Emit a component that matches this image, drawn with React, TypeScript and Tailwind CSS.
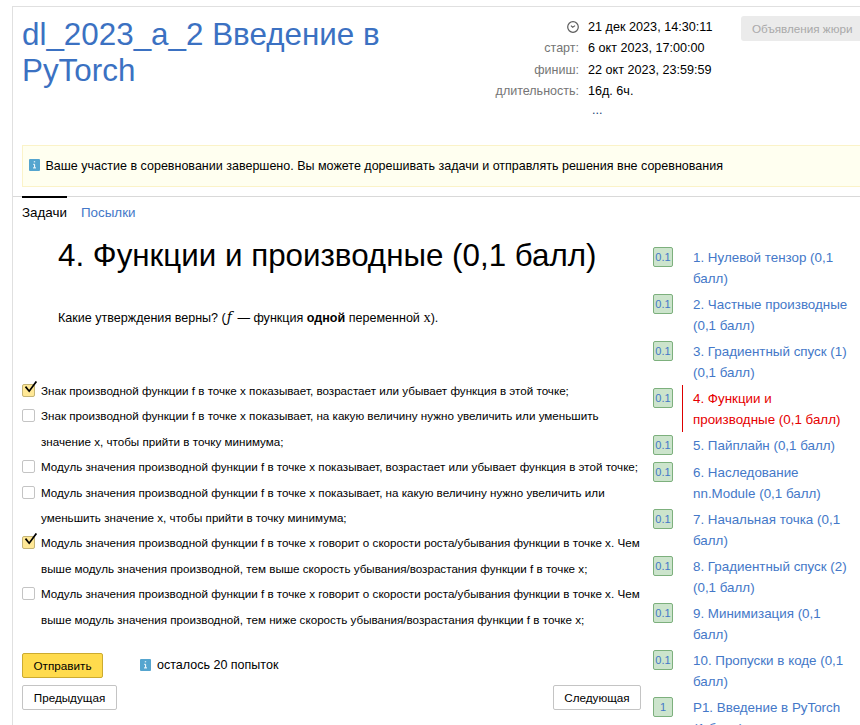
import React from 'react';

const options = [
  { checked: true, lines: ['Знак производной функции f в точке x показывает, возрастает или убывает функция в этой точке;'] },
  { checked: false, lines: ['Знак производной функции f в точке x показывает, на какую величину нужно увеличить или уменьшить', 'значение x, чтобы прийти в точку минимума;'] },
  { checked: false, lines: ['Модуль значения производной функции f в точке x показывает, возрастает или убывает функция в этой точке;'] },
  { checked: false, lines: ['Модуль значения производной функции f в точке x показывает, на какую величину нужно увеличить или', 'уменьшить значение x, чтобы прийти в точку минимума;'] },
  { checked: true, lines: ['Модуль значения производной функции f в точке x говорит о скорости роста/убывания функции в точке x. Чем', 'выше модуль значения производной, тем выше скорость убывания/возрастания функции f в точке x;'] },
  { checked: false, lines: ['Модуль значения производной функции f в точке x говорит о скорости роста/убывания функции в точке x. Чем', 'выше модуль значения производной, тем ниже скорость убывания/возрастания функции f в точке x;'] },
];

const problems = [
  { score: '0.1', lines: ['1. Нулевой тензор (0,1', 'балл)'] },
  { score: '0.1', lines: ['2. Частные производные', '(0,1 балл)'] },
  { score: '0.1', lines: ['3. Градиентный спуск (1)', '(0,1 балл)'] },
  { score: '0.1', lines: ['4. Функции и', 'производные (0,1 балл)'], active: true },
  { score: '0.1', lines: ['5. Пайплайн (0,1 балл)'] },
  { score: '0.1', lines: ['6. Наследование', 'nn.Module (0,1 балл)'] },
  { score: '0.1', lines: ['7. Начальная точка (0,1', 'балл)'] },
  { score: '0.1', lines: ['8. Градиентный спуск (2)', '(0,1 балл)'] },
  { score: '0.1', lines: ['9. Минимизация (0,1', 'балл)'] },
  { score: '0.1', lines: ['10. Пропуски в коде (0,1', 'балл)'] },
  { score: '1', lines: ['P1. Введение в PyTorch', '(1 балл)'] },
];

const times = [
  { label: 'старт:', value: '6 окт 2023, 17:00:00' },
  { label: 'финиш:', value: '22 окт 2023, 23:59:59' },
  { label: 'длительность:', value: '16д. 6ч.' },
];

function InfoIcon() {
  return (
    <svg className="block h-3 w-[11px] shrink-0" viewBox="0 0 11 12">
      <rect width="11" height="12" rx="1" fill="#55a5cf" />
      <path d="M4.8 2.8h1.4M4.2 5.3h1.4v3.4M4 8.9h3" stroke="#fff" strokeWidth="1" fill="none" />
    </svg>
  );
}

function ClockIcon() {
  return (
    <svg className="block h-3 w-3" viewBox="0 0 12 12" fill="none" stroke="#5c5c5c" strokeWidth="1.2">
      <circle cx="6" cy="6" r="5.3" />
      <path d="M3.9 4.6 5.7 6.2 8.1 4.6" strokeWidth="1.1" />
    </svg>
  );
}

function Checkbox({ checked }: { checked: boolean }) {
  return (
    <span className={`relative mt-[6px] block size-[13px] shrink-0 rounded-[2px] border ${checked ? 'border-[#c4b476] bg-[#ffe896]' : 'border-[#c4c4c4] bg-white'}`}>
      {checked && (
        <svg className="absolute -top-[4px] left-[1px] h-[14px] w-[14px]" viewBox="0 0 14 14">
          <path d="M1.5 5.6 5.2 10.2 12.4 .4" fill="none" stroke="#000" strokeWidth="1.7" />
        </svg>
      )}
    </span>
  );
}

export default function App() {
  return (
    <div className="h-[725px] w-[860px] overflow-hidden bg-white pt-[6px] pl-3 font-['Liberation_Sans',Arial,sans-serif] text-[12.53px] text-black">
      <div className="flex h-[719px] flex-col border-t border-l border-[#e0e0e0]">
        <header className="flex h-[138px] shrink-0 pl-[9px]">
          <h1 className="w-[445px] shrink-0 pt-[10px] text-[31.38px] leading-9 text-[#3b71c2]">
            dl_2023_a_2 Введение в<br />PyTorch
          </h1>
          <div className="w-[274px] shrink-0 pt-[9px]">
            <div className="flex h-[22px] items-center">
              <div className="mr-[9px] flex w-[112px] justify-end"><ClockIcon /></div>
              <div className="text-[12.65px] whitespace-nowrap">21 дек 2023, 14:30:11</div>
            </div>
            {times.map((t) => (
              <div key={t.label} className="flex h-[21.5px] items-center">
                <div className="mr-[9px] w-[112px] text-right text-[#757575]">{t.label}</div>
                <div className="text-[12.6px] whitespace-nowrap">{t.value}</div>
              </div>
            ))}
            <div className="pl-[125px] leading-[15px] text-[#1a3f78]">...</div>
          </div>
          <div className="mt-[9px] flex h-[25px] w-[130px] shrink-0 items-center rounded-[3px] bg-[#ebebeb] pl-[11px] text-[11.7px] whitespace-nowrap text-[#a9a9a9]">
            Объявления жюри
          </div>
        </header>

        <div className="ml-[9px] flex h-[42px] shrink-0 items-center gap-[5.5px] border-y border-l border-[#fbf3c8] bg-[#fffff0] pl-[6px]">
          <div className="-mt-[2px]"><InfoIcon /></div>
          <span>Ваше участие в соревновании завершено. Вы можете дорешивать задачи и отправлять решения вне соревнования</span>
        </div>

        <nav className="mt-[9px] flex h-[39px] shrink-0 gap-[14px] border-t border-[#d9d9d9] pl-[9px] text-[13.4px] leading-[29px]">
          <a className="-mt-px h-[30px] border-t-2 border-black">Задачи</a>
          <a className="pt-px text-[#4478c8]">Посылки</a>
        </nav>

        <div className="flex">
          <main className="w-[640px] shrink-0 pl-[9px]">
            <h2 className="ml-9 h-[72px] pt-px text-[31.34px] leading-[40px] whitespace-nowrap">4. Функции и производные (0,1 балл)</h2>
            <p className="ml-9 h-[71px] text-[12.55px] leading-[20px] whitespace-nowrap">
              Какие утверждения верны? (<span className="mr-[2px] ml-px font-['DejaVu_Serif',serif] text-[14px] italic">ƒ</span> — функция <b>одной</b> переменной <span className="font-['Liberation_Serif',serif] text-[14.5px]">x</span>).
            </p>
            <div className="text-[11.65px] leading-[25.4px]">
              {options.map((o, i) => (
                <label key={i} className="flex gap-[6px] whitespace-nowrap">
                  <Checkbox checked={o.checked} />
                  <span>{o.lines.map((l) => <span key={l} className="block">{l}</span>)}</span>
                </label>
              ))}
            </div>
            <div className="mt-[21px] flex items-center">
              <button className="h-[25px] w-[81px] rounded-[2px] border border-[#ccab30] bg-[#ffdb4d] text-[11.7px]">Отправить</button>
              <div className="ml-[37px] flex items-center gap-[6px]"><div className="-mt-[2px]"><InfoIcon /></div><span>осталось 20 попыток</span></div>
            </div>
            <div className="mt-[7px] flex w-[619px] justify-between text-[11.7px]">
              <button className="h-[25px] w-[95px] rounded-[2px] border border-[#c4c4c4] bg-white">Предыдущая</button>
              <button className="h-[25px] w-[88px] rounded-[2px] border border-[#c4c4c4] bg-white">Следующая</button>
            </div>
          </main>
          <aside className="mt-[9px] text-[13.38px] leading-[20.6px] text-[#4478c8]">
            {problems.map((p) => (
              <div key={p.lines[0]} className={`flex ${p.lines.length > 1 ? 'h-[47px]' : 'h-[27px]'}`}>
                <span className="mt-[3px] flex size-5 shrink-0 items-center justify-center rounded-[2px] border border-[#7db07d] bg-[#cce4cc] text-[11px]">{p.score}</span>
                <a className={`ml-[9px] border-l pt-[4px] pl-[10px] whitespace-nowrap ${p.active ? 'border-[#d00] text-[#e60000]' : 'border-transparent'}`}>
                  {p.lines.map((l) => <span key={l} className="block">{l}</span>)}
                </a>
              </div>
            ))}
          </aside>
        </div>
      </div>
    </div>
  );
}
